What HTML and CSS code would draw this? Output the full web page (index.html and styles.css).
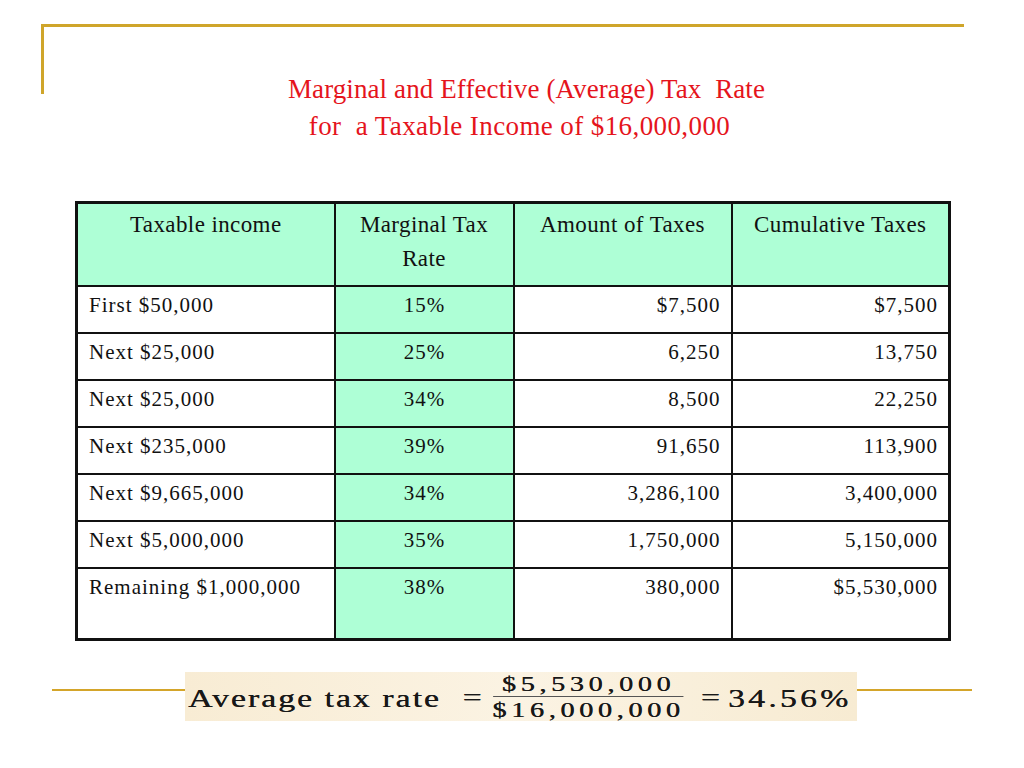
FILE: index.html
```html
<!DOCTYPE html>
<html lang="en">
<head>
<meta charset="utf-8">
<title>Marginal and Effective (Average) Tax Rate</title>
<link rel="stylesheet" href="styles.css">
</head>
<body>
<div class="slide">
  <header class="head">
    <h1 class="title">
      <span class="l1">Marginal and Effective (Average) Tax&nbsp; Rate</span>
      <span class="l2">for&nbsp; a Taxable Income of $16,000,000</span>
    </h1>
  </header>

  <table class="tax">
    <colgroup>
      <col class="c1"><col class="c2"><col class="c3"><col class="c4">
    </colgroup>
    <thead>
      <tr>
        <th>Taxable income</th>
        <th>Marginal Tax<br>Rate</th>
        <th>Amount of Taxes</th>
        <th>Cumulative Taxes</th>
      </tr>
    </thead>
    <tbody>
      <tr><td class="lab">First $50,000</td><td class="rate">15%</td><td class="num">$7,500</td><td class="num">$7,500</td></tr>
      <tr><td class="lab">Next $25,000</td><td class="rate">25%</td><td class="num">6,250</td><td class="num">13,750</td></tr>
      <tr><td class="lab">Next $25,000</td><td class="rate">34%</td><td class="num">8,500</td><td class="num">22,250</td></tr>
      <tr><td class="lab">Next $235,000</td><td class="rate">39%</td><td class="num">91,650</td><td class="num">113,900</td></tr>
      <tr><td class="lab">Next $9,665,000</td><td class="rate">34%</td><td class="num">3,286,100</td><td class="num">3,400,000</td></tr>
      <tr><td class="lab">Next $5,000,000</td><td class="rate">35%</td><td class="num">1,750,000</td><td class="num">5,150,000</td></tr>
      <tr class="last"><td class="lab">Remaining $1,000,000</td><td class="rate">38%</td><td class="num">380,000</td><td class="num">$5,530,000</td></tr>
    </tbody>
  </table>

  <div class="formula-row">
    <span class="rule left"></span>
    <div class="formula">
      <div class="formula-inner">
        <span class="word">Average tax rate</span>
        <span class="eq">=</span>
        <span class="frac">
          <span class="top">$5,530,000</span>
          <span class="bot">$16,000,000</span>
        </span>
        <span class="eq eq2">=</span>
        <span class="res">34.56%</span>
      </div>
    </div>
    <span class="rule right"></span>
  </div>
</div>
</body>
</html>
```

FILE: styles.css
```css
html, body {
  margin: 0;
  padding: 0;
  background: #ffffff;
}

.slide {
  width: 1024px;
  height: 768px;
  overflow: hidden;
  font-family: "Liberation Serif", "DejaVu Serif", serif;
  color: #111;
}

.head {
  position: relative;
  padding-top: 71px;
  height: 130px;
}

.head::before {
  content: "";
  position: absolute;
  left: 41px;
  top: 24px;
  width: 920px;
  height: 67px;
  border-top: 3px solid #cfa52a;
  border-left: 3px solid #cfa52a;
}

.title {
  margin: 0;
  font-weight: normal;
  font-size: 27px;
  line-height: 37px;
  letter-spacing: 0.1px;
  color: #e5141c;
  text-align: center;
}

.title span {
  display: block;
}

.title .l1 {
  padding-left: 29px;
}

.title .l2 {
  padding-left: 15px;
  letter-spacing: 0.4px;
}

.tax {
  margin-left: 75px;
  width: 873px;
  border-collapse: collapse;
  border: 3px solid #111;
  table-layout: fixed;
  font-size: 21px;
  letter-spacing: 1px;
}

.c1 { width: 258px; }
.c2 { width: 179px; }
.c3 { width: 218px; }
.c4 { width: 218px; }

.tax th {
  box-sizing: border-box;
  background: #aeffd6;
  border: 2px solid #111;
  font-weight: normal;
  font-size: 23px;
  letter-spacing: 0.4px;
  line-height: 34px;
  height: 83px;
  padding: 4px 8px 0;
  vertical-align: top;
  text-align: center;
}

.tax td {
  border: 2px solid #111;
  height: 47px;
  padding: 5px 10px 0 11px;
  vertical-align: top;
  line-height: 26px;
  box-sizing: border-box;
}

.tax tr.last td {
  height: 72px;
}

.tax td.rate {
  background: #aeffd6;
  text-align: center;
}

.tax td.num {
  text-align: right;
}

.formula-row {
  display: flex;
  align-items: flex-start;
  margin-top: 31px;
  padding-left: 52px;
}

.rule {
  display: block;
  height: 2px;
  margin-top: 17px;
  background: #d4a52a;
}

.rule.left { width: 133px; }
.rule.right { width: 115px; }

.formula {
  width: 672px;
  height: 49px;
  box-sizing: border-box;
  background: linear-gradient(90deg, #f8ecd4, #fbf3e3 50%, #f7ebd2);
  padding-left: 3px;
  overflow: hidden;
  font-family: "Liberation Serif", "Times New Roman", serif;
  color: #181818;
}

.formula-inner {
  display: flex;
  align-items: center;
  height: 49px;
  width: 494px;
  transform: scaleX(1.35);
  transform-origin: left center;
  font-size: 25px;
  text-shadow: 0.3px 0 0 #181818;
}

.word {
  letter-spacing: 1.5px;
  padding-top: 5px;
}

.eq {
  margin: 0 8px 0 16px;
  padding-top: 3px;
}

.eq2 {
  margin: 0 6px 0 12px;
}

.frac {
  display: inline-flex;
  flex-direction: column;
  align-items: center;
  font-size: 21px;
  letter-spacing: 3.4px;
  line-height: 22px;
}

.frac .top {
  padding: 0 6px 1px;
  border-bottom: 1.5px solid #555;
}

.frac .bot {
  padding-top: 2px;
}

.res {
  letter-spacing: 2.4px;
  padding-top: 5px;
}
```
